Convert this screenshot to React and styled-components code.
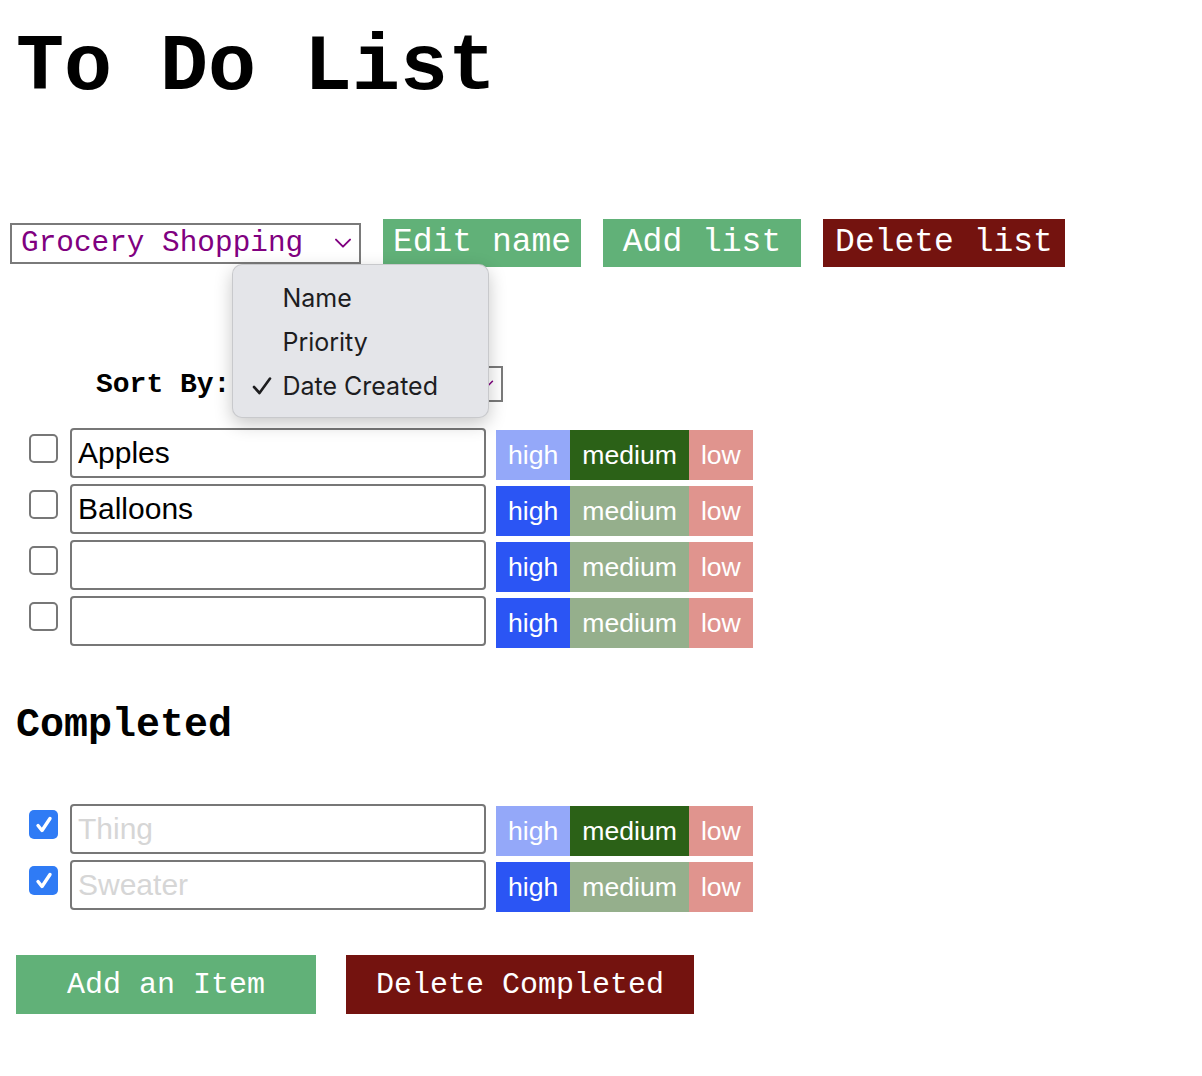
import styled, { createGlobalStyle } from "styled-components";

const mono = `"Liberation Mono", "Courier New", monospace`;
const sans = `"Liberation Sans", Arial, sans-serif`;

const GlobalStyle = createGlobalStyle`
  body {
    margin: 0;
    background: #fff;
    font-family: ${sans};
  }
`

const Page = styled.div`
  padding: 28px 0 40px 10px;
`

const Title = styled.h1`
  margin: 0 0 0 6px;
  font-family: ${mono};
  font-size: 80px;
  line-height: 80px;
  font-weight: bold;
  color: #000;
`

const ListBar = styled.div`
  display: flex;
  align-items: center;
  gap: 22px;
  margin-top: 111px;
`

const SelectBox = styled.div`
  display: flex;
  align-items: center;
  box-sizing: border-box;
  width: ${(p) => p.$width}px;
  height: ${(p) => p.$height}px;
  border: 2px solid #7a7a7a;
  background: #fff;
  padding: 0 7px 0 9px;
`

const NativeSelect = styled.select`
  flex: 1;
  appearance: none;
  border: none;
  outline: none;
  background: transparent;
  padding: 0;
  font-family: ${mono};
  font-size: ${(p) => p.$size}px;
  color: #800080;
`

const TopButton = styled.button`
  box-sizing: border-box;
  width: ${(p) => p.$width}px;
  height: 48px;
  padding: 0;
  border: none;
  font-family: ${mono};
  font-size: 33px;
  line-height: 38px;
  color: #fff;
  background: ${(p) => (p.$danger ? "#74130f" : "#61b178")};
`

const SortRow = styled.div`
  display: flex;
  align-items: center;
  gap: 9px;
  margin-top: 99px;
  padding-left: 86px;
  height: 36px;
`

const SortLabel = styled.label`
  font-family: ${mono};
  font-weight: bold;
  font-size: 28px;
  color: #000;
`

const SortWrap = styled.div`
  position: relative;
`

const Menu = styled.div`
  position: absolute;
  left: -7px;
  top: -102px;
  box-sizing: border-box;
  width: 257px;
  padding: 11px 0 9px;
  background: #e4e5e9;
  border: 1px solid rgba(0, 0, 0, 0.12);
  border-radius: 10px;
  box-shadow: 0 6px 18px rgba(0, 0, 0, 0.22);
  z-index: 5;
`

const MenuItem = styled.div`
  display: grid;
  grid-template-columns: 30px 1fr;
  align-items: center;
  height: 44px;
  padding-left: 19px;
  font-family: Inter, "Noto Sans", sans-serif;
  font-size: 25px;
  color: #1d1d1f;
`

const ItemList = styled.div`
  display: flex;
  flex-direction: column;
  gap: 4px;
  margin-top: ${(p) => p.$top}px;
`

const Row = styled.div`
  display: flex;
  align-items: flex-start;
  padding-left: 19px;
`

const Check = styled.span`
  box-sizing: border-box;
  display: flex;
  align-items: center;
  justify-content: center;
  width: 29px;
  height: 29px;
  margin-top: 6px;
  margin-right: 12px;
  border-radius: 5px;
  border: ${(p) => (p.$checked ? "none" : "2px solid #777")};
  background: ${(p) => (p.$checked ? "#2f7bf5" : "#fff")};
`

const TextInput = styled.input`
  box-sizing: border-box;
  width: 416px;
  height: 50px;
  margin: 0 10px 0 0;
  padding: 0 6px;
  border: 2px solid #777;
  border-radius: 4px;
  font-family: ${sans};
  font-size: 30px;
  color: ${(p) => (p.$done ? "#d6d6d6" : "#000")};
  outline: none;
`

const PriorityGroup = styled.div`
  display: flex;
  margin-top: 2px;
`

const colors = {
  high: ["#2b55f4", "#94a8f9"],
  medium: ["#2b6117", "#95af8c"],
  low: ["#c0392b", "#e0948e"],
};

const PriorityButton = styled.button`
  height: 50px;
  padding: 0 12px;
  border: none;
  font-family: ${sans};
  font-size: 26.6px;
  color: #fff;
  background: ${(p) => colors[p.$level][p.$active ? 0 : 1]};
`

const SectionTitle = styled.h2`
  margin: 55px 0 0 6px;
  font-family: ${mono};
  font-weight: bold;
  font-size: 40px;
  line-height: 46px;
  color: #000;
`

const Actions = styled.div`
  display: flex;
  gap: 30px;
  margin: 43px 0 0 6px;
`

const ActionButton = styled.button`
  box-sizing: border-box;
  min-width: 300px;
  height: 59px;
  padding: 0 30px;
  border: none;
  font-family: ${mono};
  font-size: 30px;
  color: #fff;
  background: ${(p) => (p.$danger ? "#74130f" : "#61b178")};
`

const Chevron = ({ w = 18 }) => (
  <svg width={w} height={w * 0.6} viewBox="0 0 16 10" fill="none">
    <path d="M1.5 1.5 L8 8 L14.5 1.5" stroke="#800080" strokeWidth="1.8" strokeLinecap="round" strokeLinejoin="round" />
  </svg>
);

const active = [
  { text: "Apples", level: "medium" },
  { text: "Balloons", level: "high" },
  { text: "", level: "high" },
  { text: "", level: "high" },
];

const done = [
  { text: "Thing", level: "medium" },
  { text: "Sweater", level: "high" },
];

const Item = ({ item, checked }) => (
  <Row>
    <Check $checked={checked}>
      {checked && (
        <svg width="20" height="20" viewBox="0 0 20 20" fill="none">
          <path d="M4 10.5 L8 15.5 L16 3.5" stroke="#fff" strokeWidth="3.4" strokeLinecap="round" strokeLinejoin="round" />
        </svg>
      )}
    </Check>
    <TextInput readOnly value={item.text} $done={checked} />
    <PriorityGroup>
      {["high", "medium", "low"].map((lvl) => (
        <PriorityButton key={lvl} $level={lvl} $active={item.level === lvl}>
          {lvl}
        </PriorityButton>
      ))}
    </PriorityGroup>
  </Row>
);

const App = () => {
  return (
    <Page>
      <GlobalStyle />
      <Title>To Do List</Title>

      <ListBar>
        <SelectBox $width={351} $height={41}>
          <NativeSelect $size={29.4} defaultValue="grocery">
            <option value="grocery">Grocery Shopping</option>
          </NativeSelect>
          <Chevron />
        </SelectBox>
        <TopButton $width={198}>Edit name</TopButton>
        <TopButton $width={198}>Add list</TopButton>
        <TopButton $width={242} $danger>Delete list</TopButton>
      </ListBar>

      <SortRow>
        <SortLabel>Sort By:</SortLabel>
        <SortWrap>
          <SelectBox $width={264} $height={36}>
            <NativeSelect $size={26} defaultValue="date">
              <option value="date">Date Created</option>
            </NativeSelect>
            <Chevron w={14} />
          </SelectBox>
          <Menu>
            <MenuItem><span />Name</MenuItem>
            <MenuItem><span />Priority</MenuItem>
            <MenuItem>
              <svg width="20" height="18" viewBox="0 0 20 18" fill="none">
                <path d="M2 10 L7.5 16 L18 1.5" stroke="#1d1d1f" strokeWidth="2.6" strokeLinecap="round" strokeLinejoin="round" />
              </svg>
              Date Created
            </MenuItem>
          </Menu>
        </SortWrap>
      </SortRow>

      <ItemList $top={26}>
        {active.map((it, i) => (
          <Item key={i} item={it} />
        ))}
      </ItemList>

      <SectionTitle>Completed</SectionTitle>

      <ItemList $top={55}>
        {done.map((it, i) => (
          <Item key={i} item={it} checked />
        ))}
      </ItemList>

      <Actions>
        <ActionButton>Add an Item</ActionButton>
        <ActionButton $danger>Delete Completed</ActionButton>
      </Actions>
    </Page>
  );
}

export default App;
